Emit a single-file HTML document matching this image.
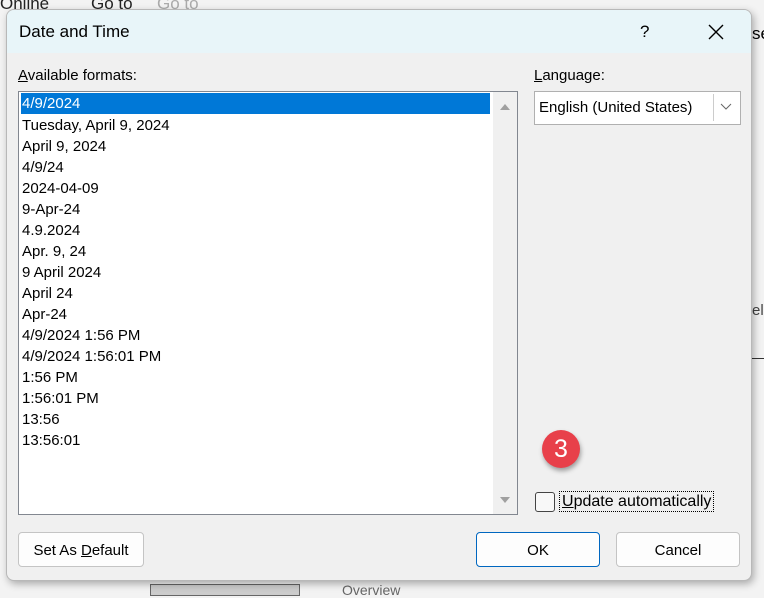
<!DOCTYPE html>
<html><head><style>
body{margin:0;width:764px;height:594px;background:#f3f3f3;position:relative;overflow:hidden;font-family:"Liberation Sans",sans-serif;font-size:15px;color:#000}
.a{position:absolute}
.dlg{position:absolute;left:6px;top:9px;width:744px;height:570px;background:#f0f0f0;border:1px solid #b8b8b8;border-radius:8px;box-shadow:2px 3px 8px rgba(0,0,0,.3);overflow:hidden}
.title{position:absolute;left:0;top:0;width:100%;height:43px;background:#e8f5f9}
.list{position:absolute;left:11px;top:81px;width:498px;height:422px;background:#fff;border:1px solid #828790}
.row{position:absolute;left:2px;height:21px;line-height:21px;padding-left:1px;width:468px}
.btn{position:absolute;height:35px;background:#fdfdfd;border:1px solid #c4c4c4;border-radius:4px;text-align:center;line-height:35px;box-sizing:border-box}
</style></head><body>
<div class="a" style="left:0;top:-6px;color:#222;font-size:17px">Online</div>
<div class="a" style="left:91px;top:-6px;color:#222;font-size:17px">Go to</div>
<div class="a" style="left:157px;top:-6px;color:#aaa;font-size:17px">Go to</div>
<div class="a" style="left:752px;top:24px;font-size:17px">se</div>
<div class="a" style="left:752px;top:302px;font-size:15px;color:#444">el</div>
<div class="a" style="left:752px;top:358px;width:12px;border-top:1px solid #333"></div>
<div class="a" style="left:150px;top:584px;width:148px;height:10px;background:#ccc;border:1px solid #666"></div>
<div class="a" style="left:342px;top:582px;color:#666;font-size:14px">Overview</div>
<div class="dlg">
<div class="title"></div>
<div class="a" style="left:12px;top:12px;font-size:17px">Date and Time</div>
<div class="a" style="left:633px;top:12px;font-size:17px">?</div>
<svg class="a" style="left:701px;top:14px" width="16" height="16"><path d="M1 1L15 15M15 1L1 15" stroke="#000" stroke-width="1.4"/></svg>
<div class="a" style="left:11px;top:57px"><u>A</u>vailable formats:</div>
<div class="a" style="left:527px;top:57px"><u>L</u>anguage:</div>
<div class="list">
<div class="row" style="top:1px;background:#0078d7;color:#fff">4/9/2024</div>
<div class="row" style="top:23px">Tuesday, April 9, 2024</div>
<div class="row" style="top:44px">April 9, 2024</div>
<div class="row" style="top:65px">4/9/24</div>
<div class="row" style="top:86px">2024-04-09</div>
<div class="row" style="top:107px">9-Apr-24</div>
<div class="row" style="top:128px">4.9.2024</div>
<div class="row" style="top:149px">Apr. 9, 24</div>
<div class="row" style="top:170px">9 April 2024</div>
<div class="row" style="top:191px">April 24</div>
<div class="row" style="top:212px">Apr-24</div>
<div class="row" style="top:233px">4/9/2024 1:56 PM</div>
<div class="row" style="top:254px">4/9/2024 1:56:01 PM</div>
<div class="row" style="top:275px">1:56 PM</div>
<div class="row" style="top:296px">1:56:01 PM</div>
<div class="row" style="top:317px">13:56</div>
<div class="row" style="top:338px">13:56:01</div>
<div class="a" style="left:474px;top:0;width:24px;height:422px;background:#f0f0f0"></div>
<svg class="a" style="left:480px;top:10px" width="12" height="10"><path d="M1 8L6 2L11 8Z" fill="#a0a0a0"/></svg>
<svg class="a" style="left:480px;top:403px" width="12" height="10"><path d="M1 2L6 8L11 2Z" fill="#a0a0a0"/></svg>
</div>
<div class="a" style="left:527px;top:81px;width:205px;height:32px;background:#fff;border:1px solid #b0b0b0"></div>
<div class="a" style="left:532px;top:89px">English (United States)</div>
<div class="a" style="left:706px;top:84px;width:25px;height:27px;border-left:1px solid #ccc"></div>
<svg class="a" style="left:713px;top:93px" width="12" height="8"><path d="M1 1L6 6L11 1" stroke="#666" fill="none"/></svg>
<div class="a" style="left:535px;top:420px;width:38px;height:38px;border-radius:50%;background:#e8404a;box-shadow:1px 3px 5px rgba(0,0,0,.35);color:#fff;font-size:25px;text-align:center;line-height:38px">3</div>
<div class="a" style="left:528px;top:482px;width:18px;height:18px;border:1px solid #444;border-radius:3px;background:#f8f8f8"></div>
<div class="a" style="left:552px;top:481px;padding:0 2px;border:1px dotted #000;line-height:19px;font-size:16px"><u>U</u>pdate automatically</div>
<div class="btn" style="left:11px;top:522px;width:126px">Set As <u>D</u>efault</div>
<div class="btn" style="left:469px;top:522px;width:124px;border-color:#0067c0">OK</div>
<div class="btn" style="left:609px;top:522px;width:124px">Cancel</div>
</div>
</body></html>
